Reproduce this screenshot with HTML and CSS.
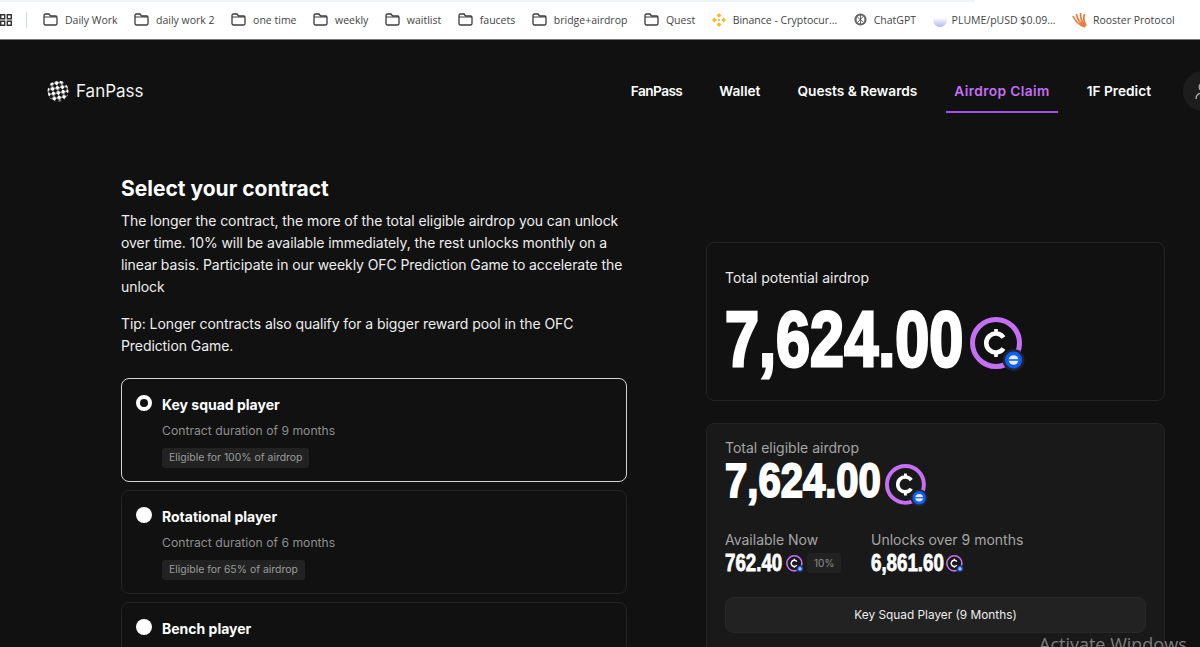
FILE: index.html
```html
<!DOCTYPE html>
<html lang="en">
<head>
    <meta charset="UTF-8">
    <meta name="viewport" content="width=device-width, initial-scale=1.0">
    <title>FanPass - Airdrop Claim</title>
    <link rel="stylesheet" href="styles.css">
</head>
<body>

    <svg class="defs" width="0" height="0" aria-hidden="true">
        <symbol id="folder" viewBox="0 0 15 13">
            <path d="M1 2.500C1 1.700 1.600 1 2.400 1H6l1.600 2h5c.8 0 1.400.6 1.400 1.400v6.200c0 .8-.6 1.400-1.400 1.400H2.400C1.600 12 1 11.300 1 10.600Z" fill="none" stroke="#3c3c3c" stroke-width="1.300"/>
            <path d="M1 4h13" stroke="#3c3c3c" stroke-width="1"/>
        </symbol>
        <symbol id="coin" viewBox="0 0 56 56">
            <circle cx="26" cy="26" r="23.500" fill="none" stroke="#c56ff5" stroke-width="5"/>
            <path d="M33.500 20.500A9.500 9.500 0 1 0 33.500 31.500" fill="none" stroke="#fff" stroke-width="4.600"/>
            <path d="M26 12v6M26 34v6" stroke="#fff" stroke-width="3.600"/>
            <circle cx="43.500" cy="43" r="11" fill="#1f2430"/>
            <circle cx="43.500" cy="43" r="8.500" fill="#0f5fff"/>
            <circle cx="43.500" cy="43" r="4.800" fill="#e6eeff"/>
            <path d="M38.500 43h10" stroke="#0f5fff" stroke-width="1.600"/>
        </symbol>
    </svg>

    <!-- Bookmarks -->
    <div class="bookmarks">
        <div class="top-strip"></div>
        <div class="bar-row">
            <svg class="apps" width="12" height="12" viewBox="0 0 12 12"><path d="M.7.700h4v4h-4zM7.300.700h4v4h-4zM.7 7.300h4v4h-4zM7.300 7.300h4v4h-4z" fill="none" stroke="#333" stroke-width="1.400"/></svg>
            <span class="divider"></span>
            <a class="mark"><svg class="folder"><use href="#folder"/></svg>Daily Work</a>
            <a class="mark"><svg class="folder"><use href="#folder"/></svg>daily work 2</a>
            <a class="mark"><svg class="folder"><use href="#folder"/></svg>one time</a>
            <a class="mark"><svg class="folder"><use href="#folder"/></svg>weekly</a>
            <a class="mark"><svg class="folder"><use href="#folder"/></svg>waitlist</a>
            <a class="mark"><svg class="folder"><use href="#folder"/></svg>faucets</a>
            <a class="mark"><svg class="folder"><use href="#folder"/></svg>bridge+airdrop</a>
            <a class="mark"><svg class="folder"><use href="#folder"/></svg>Quest</a>
            <a class="mark"><svg width="14" height="14" viewBox="0 0 14 14"><path d="M7 0l2.400 2.400L7 4.800 4.600 2.400ZM2.400 4.600 4.800 7 2.400 9.400 0 7ZM11.600 4.600 14 7l-2.400 2.400L9.200 7ZM7 5.600 8.400 7 7 8.400 5.600 7ZM7 9.200l2.400 2.400L7 14l-2.400-2.400Z" fill="#f3ba2f"/></svg>Binance - Cryptocur...</a>
            <a class="mark"><svg width="13" height="13" viewBox="0 0 13 13"><circle cx="6.500" cy="6.500" r="5" fill="none" stroke="#666" stroke-width="2.200"/><path d="M3 3.500l6.500 6M9.500 3 3.500 9.500M6.500 1.500v10" stroke="#444" stroke-width=".8"/></svg>ChatGPT</a>
            <a class="mark site"><svg width="14" height="14" viewBox="0 0 14 14"><defs><linearGradient id="pl" x1="0" y1="0" x2="0" y2="1"><stop offset=".35" stop-color="#fff"/><stop offset="1" stop-color="#b4b4ee"/></linearGradient></defs><circle cx="7" cy="7" r="7" fill="url(#pl)"/></svg>PLUME/pUSD $0.09...</a>
            <a class="mark site"><svg width="16" height="16" viewBox="0 0 16 16"><path d="M13 15C7 13 3 9 1 4M13 15C8 11 5 7 4.500 2M13 15C10 10 8 6 8.500 1M14 14C12 10 11 6 12.500 2" fill="none" stroke="#ee7a3c" stroke-width="1.700"/></svg>Rooster Protocol</a>
        </div>
    </div>

    <!-- Header -->
    <header class="site-header">
        <a class="logo">
            <svg width="22" height="22" viewBox="0 0 22 22">
                <defs>
                    <pattern id="check" width="7" height="7" patternUnits="userSpaceOnUse" patternTransform="rotate(35 11 11)">
                        <rect width="7" height="7" fill="#111"/>
                        <rect width="3.500" height="3.500" fill="#fff"/>
                        <rect x="3.500" y="3.500" width="3.500" height="3.500" fill="#fff"/>
                    </pattern>
                </defs>
                <circle cx="11" cy="11" r="10.500" fill="url(#check)"/>
            </svg>
            <span>FanPass</span>
        </a>
        <nav class="main-nav">
            <a class="tab">FanPass</a>
            <a class="tab">Wallet</a>
            <a class="tab">Quests &amp; Rewards</a>
            <a class="tab active">Airdrop Claim</a>
            <a class="tab">1F Predict</a>
        </nav>
        <div class="user-btn">
            <svg width="16" height="18" viewBox="0 0 16 18"><circle cx="8" cy="5" r="3.800" fill="none" stroke="#b5b5b5" stroke-width="1.300"/><path d="M1 17c0-4 3-6 7-6s7 2 7 6" fill="none" stroke="#b5b5b5" stroke-width="1.300"/></svg>
        </div>
    </header>

    <main class="content">
        <section class="contracts">
            <h1>Select your contract</h1>
            <p class="intro">The longer the contract, the more of the total eligible airdrop you can unlock over time. 10% will be available immediately, the rest unlocks monthly on a linear basis. Participate in our weekly OFC Prediction Game to accelerate the unlock</p>
            <p class="intro tip">Tip: Longer contracts also qualify for a bigger reward pool in the OFC Prediction Game.</p>

            <div class="contract selected">
                <span class="radio"></span>
                <div>
                    <div class="contract-name">Key squad player</div>
                    <div class="contract-sub">Contract duration of 9 months</div>
                    <span class="pill">Eligible for 100% of airdrop</span>
                </div>
            </div>
            <div class="contract">
                <span class="radio"></span>
                <div>
                    <div class="contract-name">Rotational player</div>
                    <div class="contract-sub">Contract duration of 6 months</div>
                    <span class="pill">Eligible for 65% of airdrop</span>
                </div>
            </div>
            <div class="contract">
                <span class="radio"></span>
                <div>
                    <div class="contract-name">Bench player</div>
                </div>
            </div>
        </section>

        <aside class="summary">
            <div class="panel potential">
                <div class="panel-label light">Total potential airdrop</div>
                <div class="amount big"><span class="digits">7,624.00</span><svg class="coin-big"><use href="#coin"/></svg></div>
            </div>
            <div class="panel eligible">
                <div class="panel-label">Total eligible airdrop</div>
                <div class="amount mid"><span class="digits">7,624.00</span><svg class="coin-mid"><use href="#coin"/></svg></div>
                <div class="split">
                    <div>
                        <div class="panel-label">Available Now</div>
                        <div class="amount small"><span class="digits short">762.40</span><svg class="coin-small"><use href="#coin"/></svg><span class="percent">10%</span></div>
                    </div>
                    <div>
                        <div class="panel-label">Unlocks over 9 months</div>
                        <div class="amount small"><span class="digits long">6,861.60</span><svg class="coin-small"><use href="#coin"/></svg></div>
                    </div>
                </div>
                <button class="choice">Key Squad Player (9 Months)</button>
            </div>
        </aside>
    </main>

    <div class="watermark">Activate Windows</div>

</body>
</html>
```

FILE: styles.css
```css
* {
    box-sizing: border-box;
}
html, body {
    margin: 0;
    padding: 0;
    height: 647px;
    overflow: hidden;
}
body {
    font-family: 'Inter', 'Noto Sans', sans-serif;
    background-color: #111;
    color: white;
    position: relative;
}
.defs {
    position: absolute;
}

/* bookmarks bar */
.bookmarks {
    height: 40px;
    background: #fff;
    border-bottom: 1px solid #777;
}
.top-strip {
    height: 2px;
    width: 975px;
    background: #eef2fb;
    border-radius: 0 0 8px 0;
}
.bar-row {
    display: flex;
    align-items: center;
    height: 35px;
}
.apps {
    flex: none;
}
.divider {
    width: 1px;
    height: 16px;
    background: #cfd8e6;
    margin: 0 16px 0 14px;
}
.mark {
    display: flex;
    align-items: center;
    gap: 7px;
    margin-right: 16.500px;
    font-family: 'Open Sans', 'Noto Sans', sans-serif;
    font-size: 10.500px;
    color: #444;
    white-space: nowrap;
}
.mark.site {
    gap: 5px;
}
.folder {
    width: 15px;
    height: 13px;
    flex: none;
}
.mark svg {
    flex: none;
}

/* header */
.site-header {
    display: flex;
    align-items: center;
    height: 102px;
    padding-left: 47px;
    margin-right: -23px;
}
.logo {
    display: flex;
    align-items: center;
    gap: 7px;
    font-size: 17px;
    color: #f2f2f2;
}
.main-nav {
    display: flex;
    gap: 21px;
    margin-left: auto;
    align-self: flex-start;
}
.tab {
    display: flex;
    align-items: center;
    height: 73px;
    padding: 30px 8px 0;
    font-size: 13.700px;
    font-weight: 600;
    border-bottom: 2px solid transparent;
}
.tab:first-child {
    letter-spacing: -0.600px;
}
.tab.active {
    color: #c56ff5;
    border-bottom-color: #a64fe8;
    letter-spacing: 0.400px;
}
.user-btn {
    width: 40px;
    height: 40px;
    border-radius: 50%;
    background: #1d1d1d;
    display: flex;
    align-items: center;
    justify-content: center;
    margin-left: 24px;
    flex: none;
}

/* main */
.content {
    display: flex;
    padding-left: 121px;
    align-items: flex-start;
}
.contracts {
    width: 506px;
    margin-top: 32px;
}
h1 {
    font-size: 21px;
    font-weight: 700;
    margin: 0 0 6px;
    line-height: 30px;
}
.intro {
    font-size: 14px;
    letter-spacing: -0.080px;
    line-height: 22px;
    margin: 0;
    color: #eee;
}
.tip {
    margin-top: 15px;
    margin-bottom: 21px;
}
.contract {
    display: flex;
    gap: 10px;
    height: 104px;
    padding: 15px 14px;
    margin-bottom: 8px;
    border: 1px solid #242424;
    border-radius: 8px;
}
.contract.selected {
    border-color: #d4d4d4;
}
.radio {
    width: 16px;
    height: 16px;
    border-radius: 50%;
    background: #fff;
    flex: none;
    margin-top: 1px;
}
.selected .radio {
    background: #111;
    border: 4px solid #fff;
}
.contract-name {
    font-size: 14px;
    font-weight: 700;
    line-height: 22px;
}
.contract-sub {
    font-size: 12.200px;
    color: #8e8e8e;
    line-height: 20px;
    margin-top: 5px;
}
.pill {
    display: inline-block;
    font-size: 10.450px;
    line-height: 20px;
    padding: 0 7px;
    margin-top: 7px;
    background: #222;
    color: #9a9a9a;
    border-radius: 3px;
}

/* right side */
.summary {
    width: 459px;
    margin-left: 79px;
    margin-top: 100px;
}
.panel {
    border: 1px solid #242424;
    border-radius: 8px;
    padding: 0 18px;
}
.potential {
    height: 159px;
    padding-top: 25px;
    margin-bottom: 22px;
}
.eligible {
    height: 260px;
    background: #191919;
    padding-top: 14px;
}
.panel-label {
    font-size: 14px;
    line-height: 20px;
    color: #a5a5a5;
}
.panel-label.light {
    color: #ececec;
}

/* the amounts use a squeezed bold face, no condensed font is installed */
.amount {
    display: flex;
    align-items: center;
    font-family: 'Liberation Sans', sans-serif;
    font-weight: 700;
    color: #fff;
}
.digits {
    display: inline-block;
    white-space: nowrap;
    transform-origin: left center;
}
.big {
    font-size: 77px;
    line-height: 84px;
    margin-top: 9px;
    -webkit-text-stroke: 3px #fff;
}
.big .digits {
    width: 240px;
    transform: scaleX(0.795);
}
.mid {
    font-size: 49px;
    line-height: 44px;
    height: 44px;
    margin-top: 0;
    -webkit-text-stroke: 2px #fff;
}
.mid .digits {
    width: 156px;
    transform: scaleX(0.817);
}
.small {
    font-size: 24px;
    line-height: 24px;
    margin-top: 1px;
    -webkit-text-stroke: 0.800px #fff;
}
.small .digits {
    transform: scaleX(0.78);
}
.small .short {
    width: 58px;
}
.small .long {
    width: 72px;
}
.coin-big {
    width: 56px;
    height: 56px;
    margin-left: 5px;
    margin-top: 12px;
}
.coin-mid {
    width: 44px;
    height: 44px;
    margin-left: 4px;
    margin-top: 12px;
}
.coin-small {
    width: 18px;
    height: 18px;
    margin-left: 3px;
    margin-top: 2px;
}
.percent {
    font-family: 'Inter', sans-serif;
    font-size: 10px;
    font-weight: 400;
    color: #8e8e8e;
    -webkit-text-stroke: 0;
    background: #222;
    border-radius: 3px;
    padding: 0 7px;
    line-height: 20px;
    margin-left: 3px;
}
.split {
    display: grid;
    grid-template-columns: 146px 1fr;
    margin-top: 28px;
}
.choice {
    display: block;
    width: 421px;
    height: 36px;
    margin-top: 22px;
    background: #222;
    border: 1px solid #282828;
    border-radius: 8px;
    color: #eee;
    font-family: 'Inter', sans-serif;
    font-size: 11.850px;
}

.watermark {
    position: absolute;
    left: 1039px;
    top: 632px;
    font-family: 'Open Sans', sans-serif;
    font-size: 18px;
    color: #7d7d7d;
    white-space: nowrap;
}
```
